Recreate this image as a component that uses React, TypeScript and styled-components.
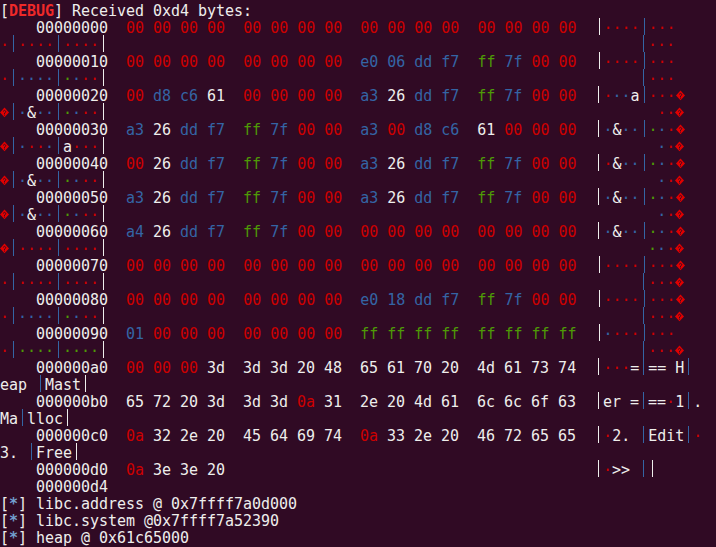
import React from "react";
import styled, { createGlobalStyle } from "styled-components";

type Tone = "red" | "blue" | "green" | "white" | "alert" | "info";
type Segment = { tone: Tone; text: string; bold?: boolean; mark?: "bar" | "diamond" };

const palette: Record<Tone, string> = {
  red: "#cc0000",
  blue: "#3465a4",
  green: "#4e9a06",
  white: "#eeeeec",
  alert: "#ef2929",
  info: "#729fcf",
};

const GlobalStyle = createGlobalStyle`
  html, body {
    margin: 0;
    padding: 0;
    background: #300a24;
  }
`;

const Terminal = styled.main`
  display: flex;
  flex-direction: column;
  width: 716px;
  height: 547px;
  padding-top: 1px;
  box-sizing: border-box;
  overflow: hidden;
  background: #300a24;
  color: #eeeeec;
  font-family: "DejaVu Sans Mono", "Liberation Mono", monospace;
  font-size: 15px;
  letter-spacing: -0.03px;
`;

const Line = styled.div`
  height: 17px;
  line-height: 21px;
  white-space: pre;
  flex: none;
`;

const Run = styled.span<{ $tone: Tone; $bold?: boolean }>`
  color: ${(p) => palette[p.$tone]};
  font-weight: ${(p) => (p.$bold ? 700 : 400)};
`;

const Bar = styled.span<{ $tone: Tone }>`
  display: inline-block;
  vertical-align: top;
  width: 4px;
  height: 17px;
  margin: 0 0 0 4px;
  border-left: 1px solid ${(p) => palette[p.$tone]};
`;

const GlyphBox = styled.svg`
  display: inline-block;
  vertical-align: top;
  width: 9px;
  height: 17px;
`;

const ReplacementGlyph = () => (
  <GlyphBox viewBox="0 0 9 17" aria-hidden="true">
    <polygon points="4.5,4.6 9,9.4 4.5,14.2 0,9.4" fill="#e00000" />
    <path
      d="M3.1 8.4 Q4.5 6.4 5.9 8.4 Q5.9 9.4 4.5 10 V11 M4.5 11.6 V12.6"
      fill="none"
      stroke="#300a24"
      strokeWidth="0.9"
    />
  </GlyphBox>
);

/* Marks used in the decoded column:
   * red dot, + blue dot, ^ green dot, ? replacement glyph, | blue bar, ! white bar */
const marks: Record<string, Segment> = {
  "*": { tone: "red", text: "·" },
  "+": { tone: "blue", text: "·" },
  "^": { tone: "green", text: "·" },
  "?": { tone: "red", text: "", mark: "diamond" },
  "|": { tone: "blue", text: "", mark: "bar" },
  "!": { tone: "white", text: "", mark: "bar" },
};

const byteTone = (pair: string): Tone => {
  if (pair === "00" || pair === "0a") return "red";
  if (pair === "ff") return "green";
  const value = parseInt(pair, 16);
  return value >= 0x20 && value < 0x7f ? "white" : "blue";
};

const merge = (segments: Segment[]): Segment[] =>
  segments.reduce<Segment[]>((out, seg) => {
    const last = out[out.length - 1];
    if (last && !last.mark && !seg.mark && last.tone === seg.tone) last.text += seg.text;
    else out.push({ ...seg });
    return out;
  }, []);

const cells = (text: string): Segment[] =>
  [...text].map((ch) => marks[ch] ?? { tone: "white" as Tone, text: ch });

const hex = (offset: string, bytes = "", decoded = ""): Segment[] => {
  const parts = bytes.padEnd(52).split(/(\s+)/);
  const hexSegs = parts.map<Segment>((part) =>
    part.trim() ? { tone: byteTone(part), text: part } : { tone: "white", text: part }
  );
  return merge([{ tone: "white", text: `    ${offset}  ` }, ...hexSegs, ...cells(decoded)]);
};

const wrap = (left: string, right = ""): Segment[] => merge(cells(left.padEnd(71) + right));

const note = (text: string): Segment[] => [
  { tone: "white", text: "[" },
  { tone: "info", text: "*", bold: true },
  { tone: "white", text: `] ${text}` },
];

const Z = "00 00 00 00";

const lines: Segment[][] = [
  [
    { tone: "white", text: "[" },
    { tone: "alert", text: "DEBUG", bold: true },
    { tone: "white", text: "] Received 0xd4 bytes:" },
  ],
  hex("00000000", `${Z}  ${Z}  ${Z}  ${Z}`, "!****|***"),
  wrap("*|****|****!", "|***"),
  hex("00000010", `${Z}  ${Z}  e0 06 dd f7  ff 7f 00 00`, "!****|***"),
  wrap("*|++++|^+**!", "|***"),
  hex("00000020", `00 d8 c6 61  ${Z}  a3 26 dd f7  ff 7f 00 00`, "!*++a|***?"),
  wrap("?|+&++|^+**!", "  **?"),
  hex("00000030", "a3 26 dd f7  ff 7f 00 00  a3 00 d8 c6  61 00 00 00", "!+&++|^+*?"),
  wrap("?|+**+|a***!", "  +*?"),
  hex("00000040", "00 26 dd f7  ff 7f 00 00  a3 26 dd f7  ff 7f 00 00", "!*&++|^+*?"),
  wrap("?|+&++|^+**!", "  +*?"),
  hex("00000050", "a3 26 dd f7  ff 7f 00 00  a3 26 dd f7  ff 7f 00 00", "!+&++|^+*?"),
  wrap("?|+&++|^+**!", "  +*?"),
  hex("00000060", `a4 26 dd f7  ff 7f 00 00  ${Z}  ${Z}`, "!+&++|^+*?"),
  wrap("?|****|****!", " ^+*?"),
  hex("00000070", `${Z}  ${Z}  ${Z}  ${Z}`, "!****|***?"),
  wrap("*|****|****!", "|***?"),
  hex("00000080", `${Z}  ${Z}  e0 18 dd f7  ff 7f 00 00`, "!****|***?"),
  wrap("*|++++|^+**!", "|***?"),
  hex("00000090", `01 00 00 00  ${Z}  ff ff ff ff  ff ff ff ff`, "!+***|***"),
  wrap("*|^^^^|^^^^!", "|***?"),
  hex("000000a0", "00 00 00 3d  3d 3d 20 48  65 61 70 20  4d 61 73 74", "!***=|== H|"),
  merge(cells("eap |Mast!")),
  hex("000000b0", "65 72 20 3d  3d 3d 0a 31  2e 20 4d 61  6c 6c 6f 63", "!er =|==*1|."),
  merge(cells("Ma|lloc!")),
  hex("000000c0", "0a 32 2e 20  45 64 69 74  0a 33 2e 20  46 72 65 65", "!*2. |Edit|*"),
  merge(cells("3. |Free!")),
  hex("000000d0", "0a 3e 3e 20", "!*>> |!"),
  hex("000000d4"),
  note("libc.address @ 0x7ffff7a0d000"),
  note("libc.system @0x7ffff7a52390"),
  note("heap @ 0x61c65000"),
];

export default function App() {
  return (
    <>
      <GlobalStyle />
      <Terminal>
        {lines.map((segments, i) => (
          <Line key={i}>
            {segments.map((seg, j) =>
              seg.mark === "bar" ? (
                <Bar key={j} $tone={seg.tone} />
              ) : seg.mark === "diamond" ? (
                <ReplacementGlyph key={j} />
              ) : (
                <Run key={j} $tone={seg.tone} $bold={seg.bold}>
                  {seg.text}
                </Run>
              )
            )}
          </Line>
        ))}
      </Terminal>
    </>
  );
}
